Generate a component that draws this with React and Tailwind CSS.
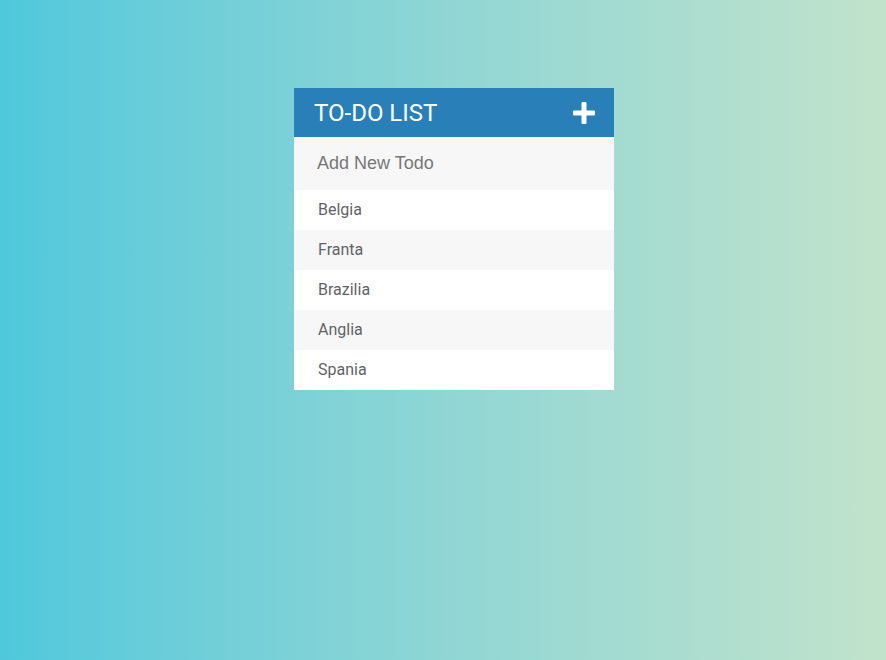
import React, { useState } from 'react';

const INITIAL = ['Belgia', 'Franta', 'Brazilia', 'Anglia', 'Spania'];

const PlusIcon = () => (
  <svg width="22" height="22" viewBox="0 0 22 22" aria-hidden="true">
    <rect x="8.5" y="0" width="5" height="22" rx="1" fill="#fff" />
    <rect x="0" y="8.5" width="22" height="5" rx="1" fill="#fff" />
  </svg>
);

const App = () => {
  const [todos, setTodos] = useState(INITIAL);
  const [text, setText] = useState('');

  const handleKey = (e) => {
    if (e.key === 'Enter' && text.trim()) {
      setTodos(prev => [...prev, text.trim()]);
      setText('');
    }
  };

  return (
    <div className="flex min-h-[660px] w-full justify-center bg-gradient-to-r from-[#4fc8dc] to-[#c1e3cb] pl-[22px] pt-[88px] font-['Roboto',sans-serif]">
      <div className="h-fit w-[320px] bg-white">
        <div className="flex h-[49px] items-center justify-between bg-[#2980b9] pl-5 pr-[19px]">
          <h1 className="text-[24px] font-normal uppercase text-white leading-none">To-Do List</h1>
          <button className="flex items-center">
            <PlusIcon />
          </button>
        </div>
        <input
          value={text}
          onChange={(e) => setText(e.target.value)}
          onKeyDown={handleKey}
          placeholder="Add New Todo"
          className="block h-[53px] w-full bg-[#f7f7f7] px-[23px] font-['Liberation_Sans',Arial,sans-serif] text-[18px] text-[#666] outline-none placeholder:text-[#777]"
        />
        <ul>
          {todos.map((t, i) => (
            <li
              key={i}
              className={`flex h-10 items-center pl-6 text-[16px] text-[#5f6368] ${i % 2 === 1 ? 'bg-[#f7f7f7]' : 'bg-white'}`}
            >
              {t}
            </li>
          ))}
        </ul>
      </div>
    </div>
  );
};

export default App;
